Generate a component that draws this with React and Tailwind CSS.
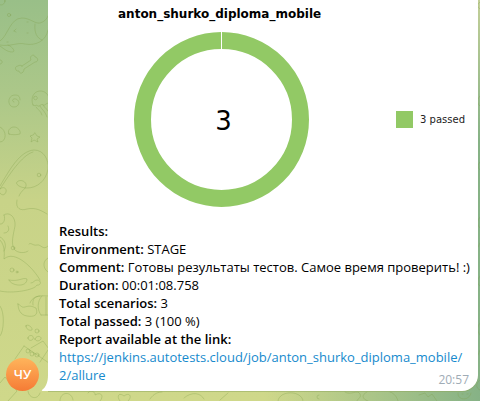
const PASSED = 3;

function Wallpaper() {
  return (
    <svg aria-hidden="true" className="absolute inset-0 h-full w-full" viewBox="0 0 480 401" preserveAspectRatio="xMinYMin slice">
      <defs>
        <linearGradient id="left" x1="0" y1="0" x2="0" y2="1">
          <stop offset="0" stopColor="#99bf88" />
          <stop offset="0.25" stopColor="#adc889" />
          <stop offset="0.5" stopColor="#c8d388" />
          <stop offset="1" stopColor="#cfd88a" />
        </linearGradient>
        <linearGradient id="right" x1="0" y1="0" x2="1" y2="0">
          <stop offset="0.55" stopColor="#86b286" stopOpacity="0" />
          <stop offset="1" stopColor="#86b286" />
        </linearGradient>
        <linearGradient id="corner" x1="0" y1="0" x2="0" y2="1">
          <stop offset="0" stopColor="#c3cf98" />
          <stop offset="0.35" stopColor="#c3cf98" stopOpacity="0" />
        </linearGradient>
      </defs>
      <rect width="480" height="401" fill="url(#left)" />
      <rect width="480" height="401" fill="url(#right)" />
      <rect x="240" width="240" height="401" fill="url(#corner)" />
      <g fill="none" stroke="#7e9f4c" strokeOpacity="0.32" strokeWidth="1" strokeLinecap="round" strokeLinejoin="round">
        <circle cx="1" cy="1" r="4" />
        <circle cx="9" cy="15" r="1.6" />
        <path d="M0 41C8 36 10 18 22 18C30 18 35 24 40 23C44 22 47 19 48 16M0 45C10 47 18 42 25 44C36 46 46 41 48 30M35 24C34 33 37 38 42 40M8 45C13 47 16 52 12 52C7 52 3 48 0 46M14 31l2-2M14 31l2 1M27 22h1M27 33h1M7 42h1M0 60c3 0 3 4 0 4" />
        <path d="M22 66L31 60C29 56 34 53 35 57C38 57 39 62 35 62L24 69C24 73 20 75 19 71C15 72 14 66 18 66C19 65 21 65 22 66Z" />
        <path d="M14 102c-3-1-1-4 2-3c5 2 3 8-2 8c-7 0-7-12 1-12c4 0 5 2 5 5" />
        <path d="M33 105C30 98 34 91 40 91C45 91 48 94 49 98M33 105c2 2 3-1 5 1c2 1 3-3 5-1c2 1 3-2 5-2M34 97c2-2 4 0 3 2c-2 2-4 0-3-2M36 107c2 3 5 4 6 8M40 106c2 4 5 5 7 11M43 105c1 3 4 3 5 6" />
        <path d="M0 127c7 3 7 15 0 15M9 134c-2-3 1-7 5-7s7 4 6 7c-4 1-8 1-11 0ZM35 133l2 3l3 1l-3 2l1 3l-4-2l-3 2l1-4l-2-2l3-1Z" />
        <path d="M0 186C10 169 20 151 34 150C44 150 49 160 48 169C46 181 37 188 27 188C20 188 15 184 17 182C20 179 25 181 26 184C27 189 21 190 19 196M0 189C9 175 22 155 33 152M0 189c3-3 7-1 6 3c-1 3-4 4-6 1" />
        <circle cx="39" cy="175" r="1.8" />
        <path d="M17 200C15 209 21 211 27 209C36 207 42 211 47 214M4 215C9 211 16 217 15 226C13 236 11 243 14 249C18 254 26 253 28 251M4 215c2 5-1 10-4 9M0 240C6 246 4 257 4 259C15 249 34 269 40 280M0 237c5 2 7 9 4 14" />
        <circle cx="13" cy="248" r="1.8" />
        <circle cx="12" cy="270" r="2" />
        <circle cx="17" cy="272" r="1" />
        <path d="M0 291C12 294 35 290 37 285c4 1 5-5 0-5c-3 0-3 3-6 3M9 280c2 6 18 8 18-1c-4-2-8 3-18 1M4 233c4 0 6-3 4-7M29 244c2-2 4 2 8 1s6 6 11 1M48 258c-6 3-5 11 0 14" />
        <path d="M18 304c3 1 3 4 7 3c6-2 8 0 11 1c3 8-3 9-9 8c-7-1-9-7-9-12ZM30 303c2-6 8-8 18-7M33 305c-1-6 2-9 7-9M41 315c-4-5-4-14 1-19M41 315h7M46 297v18M0 306c5 6 4 26 0 30" />
        <path d="M26 326c0-3 7 1 6 4c-3 1-6-1-6-4ZM28 338c0-4 7-3 5 1c-1 2-5 2-5-1ZM35 339c1-4 7-3 6 0c-2 3-6 2-6 0ZM24 346L49 363M24 346L15 359M31 348l12-7l6 8M40 362l8-12M0 383l5-6l12 14l-9 10" />
        <circle cx="37" cy="331" r="2" />
        <circle cx="28" cy="351" r="2" />
        <circle cx="32" cy="354" r="2" />
        <circle cx="37" cy="355" r="2" />
        <path d="M28 391c1 8 10 9 12 2M60 401c0-10 12-10 13-1M88 393c2-4 8-1 7 2c7-4 9 2 5 6M120 401c-4-5-1-9 4-5c5-4 9 0 4 5M150 399c4-6 9-7 12-7M184 398c8-7 17-5 20 1M220 400l8-7M278 401c1-11 24-11 25 0M319 399a2 2 0 1 1 0-4M345 392c5 4 13-3 15 2c2 4-4 5-3 8M367 392c-6 3-5 7 1 9M390 392c4 1 7 5 8 9M419 395l6-2l3 4l4-3l5 7M458 393c-1 8 12 8 13 0M462 394h1M467 394h1" />
        <path d="M480 2c-3 2-3 5 0 7M480 96c-3 3-3 8 0 10M480 162c-3 3-2 6 0 8M480 217c-3 4-3 8 0 11M480 243l-2 4M480 276c-3 4-3 8 0 10M480 323c-3 4-3 8 0 12M480 350l-2 5M480 380c-4 3-5 8 0 10" />
      </g>
    </svg>
  );
}

function DonutChart() {
  return (
    <figure className="w-full font-['DejaVu_Sans',sans-serif] text-black">
      <figcaption className="pt-1 pl-[70px] text-[12px] leading-5 font-bold whitespace-nowrap">
        anton_shurko_diploma_mobile
      </figcaption>
      <div className="flex items-center justify-between pt-2 pr-[13px] pl-[86px]">
        <div className="grid size-[175px] place-items-center">
          <svg aria-hidden="true" viewBox="0 0 175 175" className="col-start-1 row-start-1 size-full">
            <circle cx="87.5" cy="87.5" r="79" fill="none" stroke="#92c965" strokeWidth="17" />
            <path d="M87.5 0V17" stroke="#fff" strokeWidth="1" />
          </svg>
          <span className="col-start-1 row-start-1 pt-[2px] pl-1 text-[26px] leading-8">{PASSED}</span>
        </div>
        <div className="flex items-center gap-[7px] text-[10px] leading-4 text-[#222]">
          <span className="size-[17px] bg-[#92c965]" />
          <span>{PASSED} passed</span>
        </div>
      </div>
    </figure>
  );
}

const details = [
  ["Results:", ""],
  ["Environment:", "STAGE"],
  ["Comment:", "Готовы результаты тестов. Самое время проверить! :)"],
  ["Duration:", "00:01:08.758"],
  ["Total scenarios:", "3"],
  ["Total passed:", "3 (100 %)"],
  ["Report available at the link:", ""],
];

export default function App() {
  return (
    <main className="relative isolate flex min-h-screen items-end overflow-hidden bg-[#cfd88a] pr-[2px] pb-[10px] font-['Open_Sans','Noto_Sans',sans-serif]">
      <Wallpaper />
      <div className="relative flex w-12 shrink-0 items-end pl-[6px]">
        <svg aria-hidden="true" viewBox="0 0 7 16" className="absolute right-0 bottom-0 h-4 w-[7px]">
          <path d="M7 0C7 7 5 12 1 15Q0 16 2 16H7Z" fill="#fff" />
        </svg>
        <div className="relative flex size-[33px] items-center justify-center rounded-full bg-linear-to-b from-[#feb45b] to-[#f57b35] text-[13px] font-semibold text-white">
          ЧУ
        </div>
      </div>
      <article className="relative min-w-0 flex-1 rounded-br-2xl bg-white shadow-[0_1px_0_#8ea65c80]">
        <DonutChart />
        <div className="pt-[15px] pr-1 pb-[2px] pl-[11px] text-[13px] leading-[18px] text-black">
          {details.map(([label, value]) => (
            <p key={label}>
              <strong className="font-semibold">{label}</strong> {value}
            </p>
          ))}
          <a
            href="https://jenkins.autotests.cloud/job/anton_shurko_diploma_mobile/2/allure"
            className="block text-[#168acd]"
          >
            https://jenkins.autotests.cloud/job/anton_shurko_diploma_mobile/
            <wbr />
            2/allure
          </a>
          <time className="-mt-[13px] block pr-[5px] text-right text-[12px] leading-[18px] text-[#a0acb6]">20:57</time>
        </div>
      </article>
    </main>
  );
}
